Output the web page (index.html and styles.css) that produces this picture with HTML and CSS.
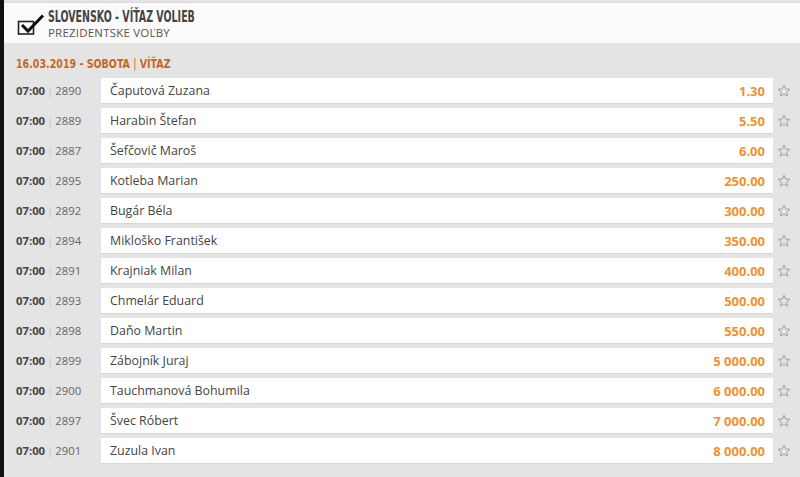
FILE: index.html
```html
<!DOCTYPE html>
<html>
<head>
<meta charset="utf-8">
<link rel="stylesheet" href="styles.css">
</head>
<body>
<div class="page">
  <div class="bar"></div>
  <div class="main">
    <div class="header">
      <svg class="check" width="30" height="24" viewBox="0 0 30 24">
        <rect x="2.5" y="7.5" width="15" height="12.5" fill="none" stroke="#222" stroke-width="1.6"/>
        <path d="M6 11 L12 17 L27 1.5" fill="none" stroke="#111" stroke-width="3" stroke-linejoin="miter"/>
      </svg>
      <div class="titles">
        <div class="title"><span class="narrow">SLOVENSKO - VÍŤAZ VOLIEB</span></div>
        <div class="subtitle">PREZIDENTSKE VOĽBY</div>
      </div>
    </div>
    <div class="content">
      <div class="date"><span class="narrow-date">16.03.2019 - SOBOTA <span class="sep">|</span> VÍŤAZ</span></div>
      <div class="rows">
        <div class="row"><div class="time"><b>07:00</b><span class="pipe">|</span>2890</div><div class="box"><span class="name">Čaputová Zuzana</span><span class="odd">1.30</span></div><svg class="star" viewBox="0 0 14 14"><path d="M7 1.2 L8.7 5 L12.8 5.3 L9.7 8 L10.6 12.1 L7 9.9 L3.4 12.1 L4.3 8 L1.2 5.3 L5.3 5 Z"/></svg></div>
        <div class="row"><div class="time"><b>07:00</b><span class="pipe">|</span>2889</div><div class="box"><span class="name">Harabin Štefan</span><span class="odd">5.50</span></div><svg class="star" viewBox="0 0 14 14"><path d="M7 1.2 L8.7 5 L12.8 5.3 L9.7 8 L10.6 12.1 L7 9.9 L3.4 12.1 L4.3 8 L1.2 5.3 L5.3 5 Z"/></svg></div>
        <div class="row"><div class="time"><b>07:00</b><span class="pipe">|</span>2887</div><div class="box"><span class="name">Šefčovič Maroš</span><span class="odd">6.00</span></div><svg class="star" viewBox="0 0 14 14"><path d="M7 1.2 L8.7 5 L12.8 5.3 L9.7 8 L10.6 12.1 L7 9.9 L3.4 12.1 L4.3 8 L1.2 5.3 L5.3 5 Z"/></svg></div>
        <div class="row"><div class="time"><b>07:00</b><span class="pipe">|</span>2895</div><div class="box"><span class="name">Kotleba Marian</span><span class="odd">250.00</span></div><svg class="star" viewBox="0 0 14 14"><path d="M7 1.2 L8.7 5 L12.8 5.3 L9.7 8 L10.6 12.1 L7 9.9 L3.4 12.1 L4.3 8 L1.2 5.3 L5.3 5 Z"/></svg></div>
        <div class="row"><div class="time"><b>07:00</b><span class="pipe">|</span>2892</div><div class="box"><span class="name">Bugár Béla</span><span class="odd">300.00</span></div><svg class="star" viewBox="0 0 14 14"><path d="M7 1.2 L8.7 5 L12.8 5.3 L9.7 8 L10.6 12.1 L7 9.9 L3.4 12.1 L4.3 8 L1.2 5.3 L5.3 5 Z"/></svg></div>
        <div class="row"><div class="time"><b>07:00</b><span class="pipe">|</span>2894</div><div class="box"><span class="name">Mikloško František</span><span class="odd">350.00</span></div><svg class="star" viewBox="0 0 14 14"><path d="M7 1.2 L8.7 5 L12.8 5.3 L9.7 8 L10.6 12.1 L7 9.9 L3.4 12.1 L4.3 8 L1.2 5.3 L5.3 5 Z"/></svg></div>
        <div class="row"><div class="time"><b>07:00</b><span class="pipe">|</span>2891</div><div class="box"><span class="name">Krajniak Milan</span><span class="odd">400.00</span></div><svg class="star" viewBox="0 0 14 14"><path d="M7 1.2 L8.7 5 L12.8 5.3 L9.7 8 L10.6 12.1 L7 9.9 L3.4 12.1 L4.3 8 L1.2 5.3 L5.3 5 Z"/></svg></div>
        <div class="row"><div class="time"><b>07:00</b><span class="pipe">|</span>2893</div><div class="box"><span class="name">Chmelár Eduard</span><span class="odd">500.00</span></div><svg class="star" viewBox="0 0 14 14"><path d="M7 1.2 L8.7 5 L12.8 5.3 L9.7 8 L10.6 12.1 L7 9.9 L3.4 12.1 L4.3 8 L1.2 5.3 L5.3 5 Z"/></svg></div>
        <div class="row"><div class="time"><b>07:00</b><span class="pipe">|</span>2898</div><div class="box"><span class="name">Daňo Martin</span><span class="odd">550.00</span></div><svg class="star" viewBox="0 0 14 14"><path d="M7 1.2 L8.7 5 L12.8 5.3 L9.7 8 L10.6 12.1 L7 9.9 L3.4 12.1 L4.3 8 L1.2 5.3 L5.3 5 Z"/></svg></div>
        <div class="row"><div class="time"><b>07:00</b><span class="pipe">|</span>2899</div><div class="box"><span class="name">Zábojník Juraj</span><span class="odd">5 000.00</span></div><svg class="star" viewBox="0 0 14 14"><path d="M7 1.2 L8.7 5 L12.8 5.3 L9.7 8 L10.6 12.1 L7 9.9 L3.4 12.1 L4.3 8 L1.2 5.3 L5.3 5 Z"/></svg></div>
        <div class="row"><div class="time"><b>07:00</b><span class="pipe">|</span>2900</div><div class="box"><span class="name">Tauchmanová Bohumila</span><span class="odd">6 000.00</span></div><svg class="star" viewBox="0 0 14 14"><path d="M7 1.2 L8.7 5 L12.8 5.3 L9.7 8 L10.6 12.1 L7 9.9 L3.4 12.1 L4.3 8 L1.2 5.3 L5.3 5 Z"/></svg></div>
        <div class="row"><div class="time"><b>07:00</b><span class="pipe">|</span>2897</div><div class="box"><span class="name">Švec Róbert</span><span class="odd">7 000.00</span></div><svg class="star" viewBox="0 0 14 14"><path d="M7 1.2 L8.7 5 L12.8 5.3 L9.7 8 L10.6 12.1 L7 9.9 L3.4 12.1 L4.3 8 L1.2 5.3 L5.3 5 Z"/></svg></div>
        <div class="row"><div class="time"><b>07:00</b><span class="pipe">|</span>2901</div><div class="box"><span class="name">Zuzula Ivan</span><span class="odd">8 000.00</span></div><svg class="star" viewBox="0 0 14 14"><path d="M7 1.2 L8.7 5 L12.8 5.3 L9.7 8 L10.6 12.1 L7 9.9 L3.4 12.1 L4.3 8 L1.2 5.3 L5.3 5 Z"/></svg></div>
      </div>
    </div>
  </div>
</div>
</body>
</html>
```
FILE: styles.css
```css
* { box-sizing: border-box; }
html, body { margin: 0; padding: 0; }
body {
  width: 800px;
  height: 477px;
  overflow: hidden;
  background: #e4e4e4;
  font-family: "Open Sans", "DejaVu Sans", sans-serif;
  color: #444;
}
.page { display: flex; height: 477px; }
.bar { width: 4px; background: #111; flex: none; }
.main { flex: 1; display: flex; flex-direction: column; }
.header {
  margin-top: 2px;
  border-top: 1px solid #dcdcdc;
  background: #fbfbfb;
  height: 41px;
  display: flex;
  align-items: flex-start;
  padding-left: 12px;
}
.check { margin-top: 11px; flex: none; }
.titles { margin-left: 2px; padding-top: 5px; }
.title {
  font-family: "DejaVu Sans Condensed", "DejaVu Sans", sans-serif;
  font-stretch: condensed;
  font-weight: bold;
  font-size: 15.5px;
  line-height: 18px;
  height: 18px;
  color: #444;
  white-space: nowrap;
}
.narrow {
  display: inline-block;
  transform: scaleX(0.68);
  transform-origin: 0 50%;
}
.subtitle {
  font-size: 11.5px;
  line-height: 14px;
  color: #555;
  margin-top: 0;
  letter-spacing: 0.2px;
}
.content { padding: 13px 0 0 12px; }
.date {
  font-family: "DejaVu Sans Condensed", "DejaVu Sans", sans-serif;
  font-stretch: condensed;
  font-weight: bold;
  font-size: 12px;
  line-height: 16px;
  color: #c8661e;
  height: 16px;
  margin-bottom: 6px;
  white-space: nowrap;
}
.narrow-date {
  display: inline-block;
  transform: scaleX(0.88);
  transform-origin: 0 50%;
}
.date .sep { color: #c8661e; font-weight: normal; }
.rows { display: flex; flex-direction: column; gap: 5px; }
.row { display: flex; align-items: center; height: 25px; }
.time { width: 85px; font-size: 11.3px; color: #666; flex: none; }
.time b { color: #444; font-weight: 700; }
.pipe { color: #c8c8c8; margin: 0 2px 0 2px; }
.box {
  width: 672px;
  height: 25px;
  background: #fff;
  display: flex;
  align-items: center;
  justify-content: space-between;
  padding: 0 8px 0 9px;
  box-shadow: 0 1px 0 #d6d6d6;
  flex: none;
}
.name { font-size: 12.4px; color: #444; }
.odd { font-size: 13px; font-weight: 700; color: #f0922f; }
.star {
  width: 14px;
  height: 14px;
  margin-left: 4px;
  fill: none;
  stroke: #a0a0a0;
  stroke-width: 1;
  stroke-linejoin: round;
}
```
